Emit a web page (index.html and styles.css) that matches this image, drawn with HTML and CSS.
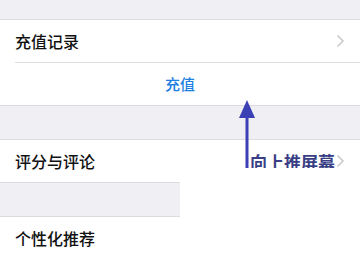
FILE: index.html
```html
<!DOCTYPE html>
<html>
<head>
<meta charset="utf-8">
<link rel="stylesheet" href="styles.css">
</head>
<body>
<div class="page">
  <div class="gap gap-top"></div>
  <div class="group">
    <div class="row">
      <span class="label">充值记录</span>
      <span class="chev"><svg width="9" height="14" viewBox="0 0 9 14"><path d="M1.5 1.5 L7 7 L1.5 12.5" fill="none" stroke="#c7c7cc" stroke-width="1.5"/></svg></span>
    </div>
    <div class="sep"></div>
    <div class="row row-action">
      <span class="action">充值</span>
    </div>
  </div>
  <div class="gap"></div>
  <div class="group">
    <div class="row">
      <span class="label">评分与评论</span>
      <span class="chev"><svg width="9" height="14" viewBox="0 0 9 14"><path d="M1.5 1.5 L7 7 L1.5 12.5" fill="none" stroke="#c7c7cc" stroke-width="1.5"/></svg></span>
    </div>
  </div>
  <div class="gap"></div>
  <div class="group">
    <div class="row">
      <span class="label">个性化推荐</span>
    </div>
  </div>

  <div class="note">向上推屏幕</div>
  <svg class="arrow" width="20" height="72" viewBox="0 0 20 72">
    <path d="M10 0 L18 18 L2 18 Z" fill="#3b40b4"/>
    <rect x="8.5" y="16" width="3" height="56" fill="#3b40b4"/>
  </svg>
  <div class="cover"></div>
</div>
</body>
</html>
```
FILE: styles.css
```css
html, body {
  margin: 0;
  padding: 0;
}
body {
  background: #efeff4;
  font-family: "Noto Sans CJK SC", "Noto Sans", sans-serif;
}
.page {
  position: relative;
  width: 360px;
  height: 259px;
  overflow: hidden;
}
.gap {
  height: 33px;
}
.gap-top {
  height: 19px;
}
.group {
  background: #fff;
  border-top: 1px solid #dcdce0;
  border-bottom: 1px solid #dcdce0;
}
.row {
  height: 42px;
  display: flex;
  align-items: center;
  justify-content: space-between;
  padding: 0 15px;
}
.label {
  font-size: 16px;
  font-weight: 500;
  color: #111;
  margin-top: -1px;
}
.chev {
  display: flex;
  align-items: center;
}
.sep {
  height: 1px;
  margin-left: 15px;
  background: #dcdce0;
}
.row-action {
  justify-content: center;
}
.action {
  font-size: 15px;
  font-weight: 500;
  color: #1b7fe3;
  margin-top: -1px;
}
.note {
  position: absolute;
  left: 250px;
  top: 149px;
  font-size: 17px;
  font-weight: bold;
  color: #3a3f85;
}
.arrow {
  position: absolute;
  left: 237px;
  top: 100px;
}
.cover {
  position: absolute;
  left: 180px;
  top: 168px;
  right: 0;
  bottom: 0;
  background: #fff;
}
```
